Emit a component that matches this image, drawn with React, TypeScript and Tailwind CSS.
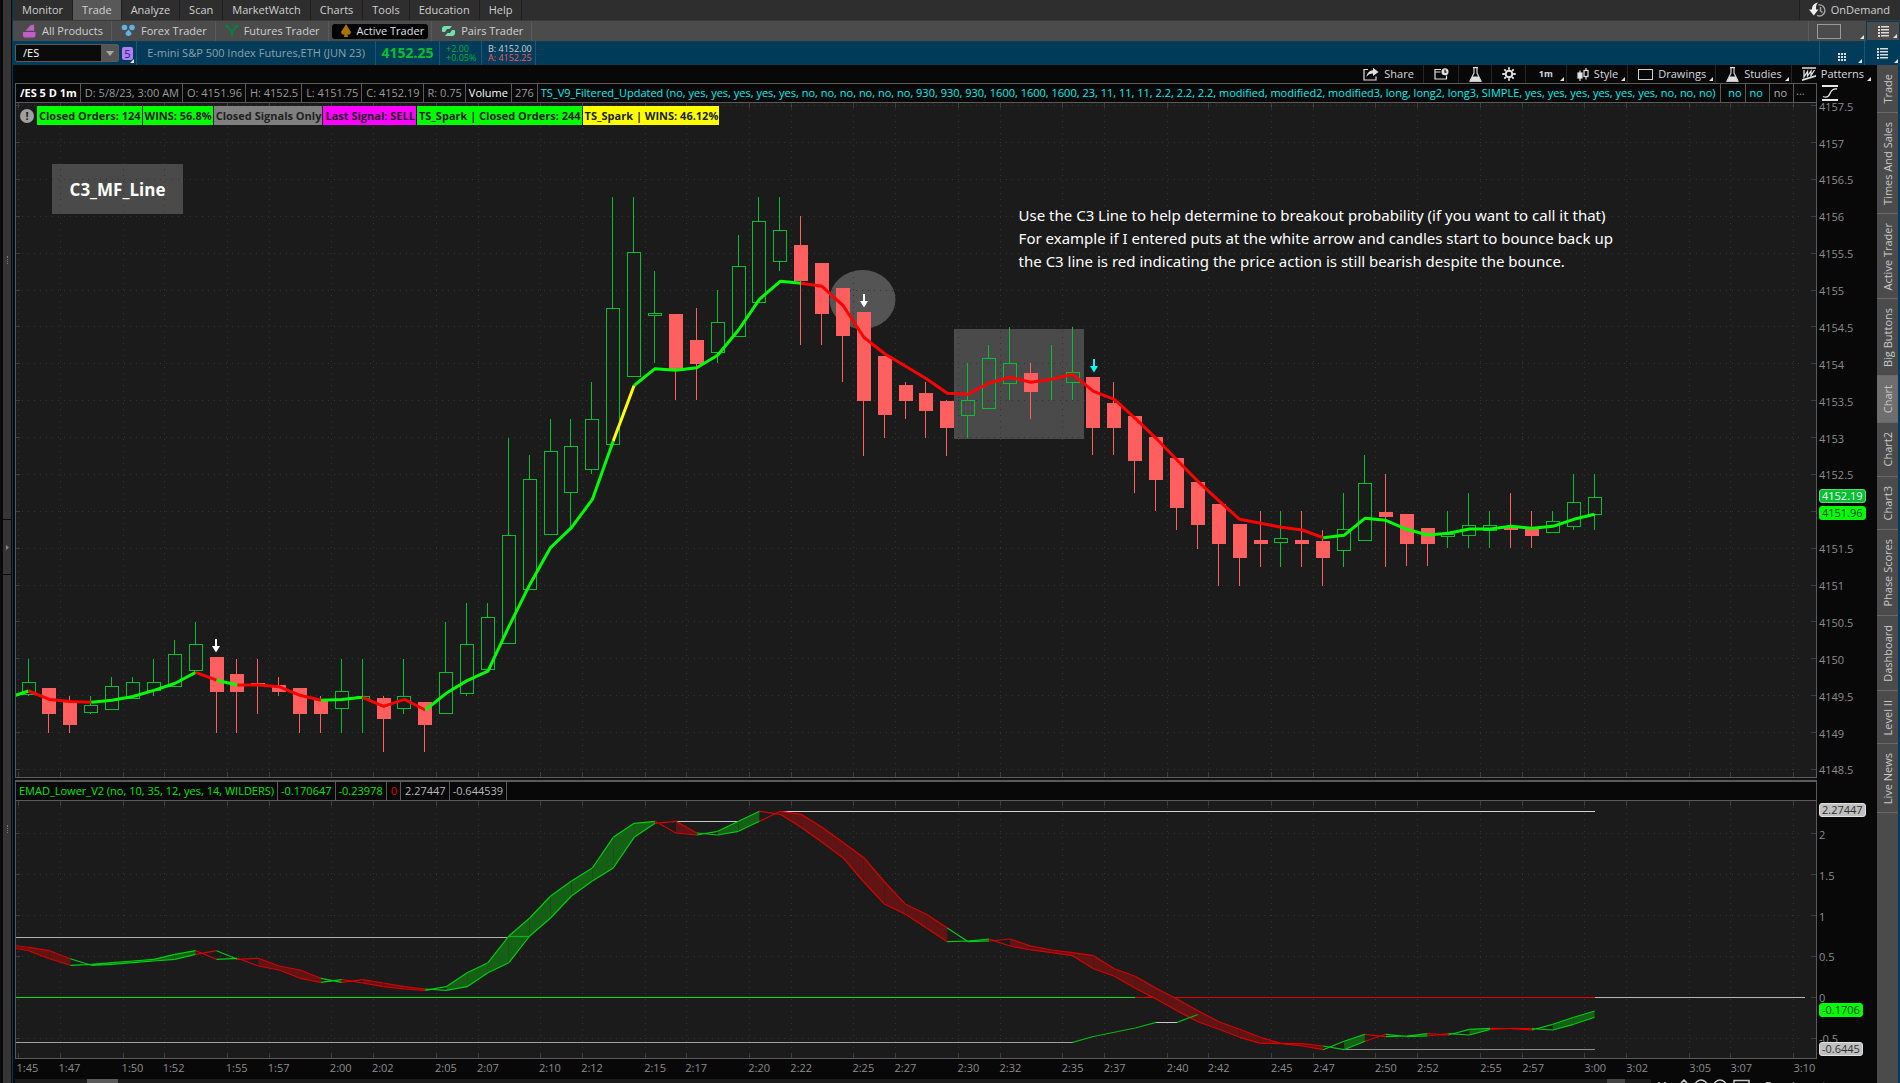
import type { ReactNode } from 'react';
import { clsx } from 'clsx';

const GREEN = '#00c030';
const RED = '#ff5f5f';

const menuItems = ['Monitor', 'Trade', 'Analyze', 'Scan', 'MarketWatch', 'Charts', 'Tools', 'Education', 'Help'];

const sideTabs = [
  'Trade', 'Times And Sales', 'Active Trader', 'Big Buttons', 'Chart', 'Chart2',
  'Chart3', 'Phase Scores', 'Dashboard', 'Level II', 'Live News',
];

const orderLabels = [
  { text: 'Closed Orders: 124', cls: 'bg-[#00ff00]' },
  { text: 'WINS: 56.8%', cls: 'bg-[#00ff00]' },
  { text: 'Closed Signals Only', cls: 'bg-[#808080]' },
  { text: 'Last Signal: SELL', cls: 'bg-[#ff00ff]' },
  { text: 'TS_Spark | Closed Orders: 244', cls: 'bg-[#00ff00]' },
  { text: 'TS_Spark | WINS: 46.12%', cls: 'bg-[#ffff00]' },
];

// Plot space: both panes share one coordinate system, one bar every 20.88 units
const LEFT = 16;
const WIDTH = 1800;
const TOP = 103;
const HEIGHT = 674;
const LOWER_TOP = 801;
const LOWER_HEIGHT = 257;
const STEP = 20.88;

const barX = (i: number) => 28.6 + i * STEP;
const slotX = (i: number) => Math.round(18.2 + i * STEP) + 0.5;
const priceY = (p: number) => 179.4 + (4156.5 - p) * 73.75;
const valueY = (v: number) => 997.3 - v * 81.7;

const prices = Array.from({ length: 19 }, (_, i) => 4157.5 - i * 0.5);
const values = [2, 1.5, 1, 0.5, 0, -0.5];
const ticks = Array.from({ length: 86 }, (_, i) => i).filter((i) => i % 5 === 0 || i % 5 === 2);

const timeLabel = (i: number) => {
  const m = 105 + i;
  return `${Math.floor(m / 60)}:${String(m % 60).padStart(2, '0')}`;
};

// [up?, high, body top, body bottom, low]
const candles: [number, number, number, number, number][] = [
  [1, 659, 682, 694, 696], [0, 688, 688, 714, 733], [0, 696, 702, 725, 733], [1, 696, 705, 712, 714],
  [1, 677, 686, 709, 709], [1, 677, 682, 698, 698], [1, 659, 682, 690, 696], [1, 640, 654, 686, 686],
  [1, 622, 644, 670, 670], [0, 657, 657, 692, 733], [0, 659, 674, 692, 733], [0, 659, 683, 685, 714],
  [0, 677, 685, 692, 696], [0, 688, 688, 714, 733], [0, 696, 700, 714, 733], [1, 659, 691, 708, 733],
  [1, 659, 696, 698, 733], [0, 696, 698, 719, 752], [1, 659, 696, 708, 714], [0, 702, 702, 725, 752],
  [1, 622, 672, 713, 713], [1, 603, 644, 693, 696], [1, 603, 617, 669, 669], [1, 438, 535, 643, 643],
  [1, 455, 479, 589, 589], [1, 419, 451, 534, 534], [1, 419, 446, 492, 527], [1, 382, 419, 469, 474],
  [1, 197, 308, 444, 444], [1, 197, 252, 376, 376], [1, 271, 313, 315, 363], [0, 314, 314, 370, 400],
  [0, 308, 340, 364, 400], [1, 290, 322, 352, 363], [1, 235, 266, 336, 336], [1, 197, 221, 302, 302],
  [1, 197, 230, 261, 271], [0, 216, 245, 281, 345], [0, 263, 263, 314, 345], [0, 288, 288, 336, 382],
  [0, 312, 312, 401, 456], [0, 356, 356, 415, 438], [0, 382, 385, 401, 419], [0, 382, 393, 411, 438],
  [0, 400, 401, 428, 456], [1, 363, 400, 415, 438], [1, 345, 358, 408, 408], [1, 327, 363, 383, 400],
  [0, 363, 373, 392, 419], [1, 345, 382, 382, 400], [1, 327, 372, 382, 400], [0, 377, 377, 428, 455],
  [0, 382, 403, 428, 455], [0, 416, 416, 461, 493], [0, 437, 437, 480, 511], [0, 458, 458, 508, 530],
  [0, 482, 482, 525, 549], [0, 504, 504, 544, 586], [0, 524, 524, 558, 586], [0, 511, 540, 544, 567],
  [1, 511, 538, 542, 567], [0, 511, 540, 544, 567], [0, 530, 541, 558, 586], [1, 493, 529, 550, 567],
  [1, 455, 483, 540, 540], [0, 474, 512, 517, 567], [0, 514, 514, 544, 566], [0, 528, 528, 544, 566],
  [1, 511, 534, 536, 548], [1, 493, 525, 535, 548], [1, 511, 525, 530, 548], [0, 493, 526, 530, 548],
  [0, 511, 528, 536, 548], [1, 511, 521, 532, 532], [1, 474, 502, 526, 530], [1, 474, 497, 514, 530],
];

const mfLine = [
  691, 699.4, 701.4, 702.2, 700.2, 696.5, 690.4, 683.5, 672.4, 680.2, 685, 685, 686.7, 695.3, 700.2, 699.4,
  697.3, 706.3, 699.4, 710, 693.3, 680.6, 671.2, 626.7, 584.7, 547.6, 527.6, 499.4, 441, 385.5, 368.7, 370.3,
  367.7, 355.3, 330, 299.3, 281.3, 283.3, 286.3, 305.3, 337.3, 353.7, 366.3, 378.7, 393.3, 394.3, 383, 377.3,
  382.3, 379.3, 374.3, 391.3, 399.3, 418.3, 438.3, 460, 481.3, 500.7, 519.3, 523.3, 527.3, 530, 537.7, 535.3,
  518.3, 520.3, 529.3, 535, 533.3, 529, 529, 526.3, 528.3, 526.3, 519.3, 514.3,
];

// [from bar, to bar, colour]
const mfRuns: [number, number, string][] = [
  [0, 3, '#ff0000'], [3, 8, '#00ff00'], [8, 9, '#ff0000'], [9, 10, '#00ff00'], [10, 14, '#ff0000'],
  [14, 16, '#00ff00'], [16, 19, '#ff0000'], [19, 28, '#00ff00'], [28, 29, '#ffff00'], [29, 37, '#00ff00'],
  [37, 62, '#ff0000'], [62, 75, '#00ff00'],
];

const emad = [
  950.7, 958.7, 965.3, 964.3, 962.7, 961, 959.3, 954.3, 950.7, 959.3, 958.3, 966, 970, 978.3, 982.3, 979.7,
  983, 986.7, 989, 990.3, 986.7, 972.7, 962.7, 936, 918, 896, 881, 868, 837.3, 823.3, 821.3, 833,
  835, 831.3, 821.3, 811.3, 814.3, 827.3, 842.3, 857.7, 882, 904.3, 914.3, 928, 941.7, 941, 939, 946,
  950, 952.7, 955.7, 968.7, 976.3, 988.3, 999, 1010.7, 1021.7, 1029.3, 1037.3, 1043.3, 1043.6, 1046, 1049.7, 1041.3,
  1034.3, 1036.7, 1036, 1033.7, 1035, 1029.3, 1028.3, 1028.7, 1030, 1024.3, 1017.3, 1011,
];

const pts = (list: [number, number][]) => list.map(([x, y]) => `${x},${y}`).join(' ');

function Corner() {
  return (
    <svg viewBox="0 0 4 4" className="absolute right-0.5 bottom-0.5 size-1" aria-hidden="true">
      <path d="M4 0V4H0z" fill="#e5e5e5" />
    </svg>
  );
}

function ProductsIcon() {
  return (
    <svg width="15" height="14" viewBox="0 0 15 14" fill="#c25fc4">
      <path d="M1 8h12.500v3.500a2 2 0 0 1-2 2H3a2 2 0 0 1-2-2z" />
      <path d="M3.500 6.800L8.500 1.200l3.500-.8.3 6.400z" />
    </svg>
  );
}

function ForexIcon() {
  return (
    <svg width="15" height="14" viewBox="0 0 15 14" fill="#5cb3e6">
      <circle cx="3.500" cy="3.500" r="2.800" />
      <circle cx="11" cy="3.500" r="2.800" />
      <path d="M7.500 5.500l3 3.500a3 3 0 1 1-6 0z" />
    </svg>
  );
}

function FuturesIcon() {
  return (
    <svg width="14" height="14" viewBox="0 0 14 14" fill="none" stroke="#0d7a45" strokeWidth="2.200">
      <path d="M2.500 2.500L7 7.500l4.500-5M7 7v6" />
      <circle cx="2.300" cy="2.300" r="1" fill="#0d7a45" />
      <circle cx="11.700" cy="2.300" r="1" fill="#0d7a45" />
    </svg>
  );
}

function ActiveIcon() {
  return (
    <svg width="12" height="14" viewBox="0 0 12 14" fill="#a87400">
      <path d="M6 0l1.500 2.500L11 8l-1 2.500H7.500L8 13H4l.5-2.500H2L1 8l3.500-5.500z" />
    </svg>
  );
}

function PairsIcon() {
  return (
    <svg width="15" height="12" viewBox="0 0 15 12" fill="#6fe0b0">
      <path d="M4 1h7l-2.500 3H6L4 7H1.500A3 3 0 0 1 1 4a3 3 0 0 1 3-3z" />
      <path d="M11 11H4l2.500-3H9l2-3h2.500a3 3 0 0 1 .5 3 3 3 0 0 1-3 3z" />
    </svg>
  );
}

function OnDemandIcon() {
  return (
    <svg width="18" height="16" viewBox="0 0 18 16" fill="none" stroke="#a8a8a8" strokeWidth="1.400">
      <path d="M9.500 3a5.500 5.500 0 1 1-1.500 10.300" />
      <path d="M11.500 5v4l2 1.500" />
      <path d="M9 .5C4.500 1.500 3 4 3 7.500H0L4.800 13.500l4.600-6H7C6.800 5 7.200 2.500 9 .5z" fill="#f0f0f0" stroke="none" />
    </svg>
  );
}

function ListIcon() {
  return (
    <svg width="11" height="11" viewBox="0 0 11 11" fill="#dcdcdc">
      {[0, 3, 6, 9].map((y) => (
        <path key={y} d={`M0 ${y}h2v2H0zM3 ${y}h8v1.500H3z`} />
      ))}
    </svg>
  );
}

function GridIcon() {
  return (
    <svg width="8" height="8" viewBox="0 0 8 8" fill="#dcdcdc">
      {[0, 3, 6].map((y) => (
        <path key={y} d={`M0 ${y}h2v2H0zM3 ${y}h2v2H3zM6 ${y}h2v2H6z`} />
      ))}
    </svg>
  );
}

function ShareIcon() {
  return (
    <svg width="16" height="14" viewBox="0 0 16 14" fill="none" stroke="#e0e0e0" strokeWidth="1.200">
      <path d="M5 2.500H1v10.500h12V9.500" />
      <path d="M10 .8L15.500 5 10 9V6.500C7 6.500 5 7.500 3.500 10 4 6 6.500 3.300 10 3.200z" fill="#e0e0e0" stroke="none" />
    </svg>
  );
}

function CalendarIcon() {
  return (
    <svg width="15" height="12" viewBox="0 0 15 12" fill="none" stroke="#e0e0e0" strokeWidth="1.200">
      <path d="M7 1.500H1V11h11.500V7.500M1 4h5.500" />
      <circle cx="11" cy="3.800" r="3.500" fill="#e0e0e0" stroke="none" />
      <path d="M11 1.800v2.400h1.500" stroke="#111" />
    </svg>
  );
}

function FlaskIcon() {
  return (
    <svg width="13" height="15" viewBox="0 0 13 15" fill="none" stroke="#e0e0e0" strokeWidth="1.100">
      <path d="M4 .6h5M5 .6v5.400L.8 14.300h11.400L8 6V.6" />
      <path d="M3.500 9.500h6L12 14.400H1z" fill="#e0e0e0" stroke="none" />
    </svg>
  );
}

function GearIcon() {
  return (
    <svg width="14" height="14" viewBox="0 0 14 14" fill="none" stroke="#e0e0e0">
      <circle cx="7" cy="7" r="3.300" strokeWidth="2" />
      <path d="M7 .3v2.500M7 11.200v2.500M.3 7h2.500M11.200 7h2.500M2.300 2.300L4 4M10 10l1.700 1.700M2.300 11.700L4 10M10 4l1.700-1.700" strokeWidth="1.800" />
    </svg>
  );
}

function StyleIcon() {
  return (
    <svg width="12" height="13" viewBox="0 0 12 13" fill="none" stroke="#e0e0e0" strokeWidth="1.200">
      <path d="M3 2.500V13M9 0v2.500M9 8.500v3" />
      <rect x="1" y="5" width="4" height="5" fill="#e0e0e0" />
      <rect x="7" y="2.500" width="4" height="6" />
    </svg>
  );
}

function BoxIcon() {
  return <span className="h-[11px] w-[15px] border border-[#d0d0d0]" />;
}

function PatternsIcon() {
  return (
    <svg width="14" height="14" viewBox="0 0 14 14" fill="none" stroke="#e0e0e0" strokeWidth="1.300">
      <path d="M0 1h14M0 13.200l14-4.400" strokeWidth="1.600" />
      <path d="M2 3v7l3.500-5.500V9L9 4v4.500L12.500 3" />
    </svg>
  );
}

function CurveIcon() {
  return (
    <svg width="16" height="16" viewBox="0 0 16 16" fill="none" stroke="#e8e8e8">
      <path d="M0 1h16M0 15h16" strokeWidth="2" />
      <path d="M1 11.500c5 2 6-1 7.500-4S12 3.500 15 4" strokeWidth="1.300" />
    </svg>
  );
}

function MenuBar() {
  return (
    <nav className="flex h-[21px] items-stretch border-b border-[#3a3a3a] bg-[#2e2e2e] text-[#d0d0d0]">
      {menuItems.map((item) => (
        <button
          key={item}
          className={clsx('border-r border-[#1f1f1f] px-[9px]', item === 'Trade' && 'bg-[#585858]')}
        >
          {item}
        </button>
      ))}
      <div className="flex-1" />
      <button className="flex items-center gap-1 border-l border-[#1f1f1f] pr-2.5 pl-[9px]">
        <OnDemandIcon />
        OnDemand
      </button>
    </nav>
  );
}

function TraderTab({ icon, label, active }: { icon: ReactNode; label: string; active?: boolean }) {
  return (
    <div className={clsx('flex items-center border-r border-[#5a5a5a]', active && 'px-[3px]')}>
      <button
        className={clsx(
          'flex items-center gap-[5px]',
          active ? 'h-[15px] rounded-[3px] bg-black pr-1 pl-2 text-[#e0e0e0]' : 'pr-2 pl-[9px]',
        )}
      >
        {icon}
        {label}
      </button>
    </div>
  );
}

function TraderBar() {
  return (
    <div className="flex h-5 items-stretch bg-[#4b4b4b] text-[#cfcfcf]">
      <TraderTab icon={<ProductsIcon />} label="All Products" />
      <TraderTab icon={<ForexIcon />} label="Forex Trader" />
      <TraderTab icon={<FuturesIcon />} label="Futures Trader" />
      <TraderTab icon={<ActiveIcon />} label="Active Trader" active />
      <TraderTab icon={<PairsIcon />} label="Pairs Trader" />
      <div className="flex-1" />
      <button aria-label="Layout" className="relative flex w-[58px] items-center border-l border-[#5a5a5a] pl-2">
        <span className="h-[15px] w-6 border border-[#9a9a9a]" />
        <Corner />
      </button>
      <button aria-label="Options" className="relative flex w-[34px] items-center justify-center border border-[#003d5c]">
        <ListIcon />
        <Corner />
      </button>
    </div>
  );
}

function SymbolBar() {
  return (
    <div className="flex h-6 items-stretch bg-[#003b59]">
      <div className="my-[3px] ml-0.5 flex w-[104px] rounded-[2px] border border-[#5a5a5a] bg-[#0b0b0b]">
        <input
          aria-label="Symbol"
          defaultValue="/ES"
          className="w-0 flex-1 bg-transparent pl-[7px] text-[11px] text-white outline-none"
        />
        <button aria-label="Recent symbols" className="flex w-[17px] items-center justify-center bg-[#555555]">
          <svg width="8" height="5" viewBox="0 0 8 5"><path d="M0 0h8L4 5z" fill="#a8a8a8" /></svg>
        </button>
      </div>
      <div className="relative flex w-[18px] items-center justify-center border-r border-[#1d5575]">
        <span className="rounded-[2px] bg-[#b57bff] px-0.5 text-[11px] leading-[13px] text-[#102a50]">5</span>
        <Corner />
      </div>
      <span className="flex w-[239px] items-center justify-center border-r border-[#1d5575] text-[#8fa0ac]">
        E-mini S&amp;P 500 Index Futures,ETH (JUN 23)
      </span>
      <strong className="flex w-16 items-center justify-center border-r border-[#1d5575] text-[14px] text-[#00c030]">
        4152.25
      </strong>
      <div className="flex w-[42px] flex-col justify-center border-r border-[#1d5575] pl-1.5 text-[9px] leading-[9px] text-[#00b030]">
        <span>+2.00</span>
        <span>+0.05%</span>
      </div>
      <div className="flex w-[54px] flex-col justify-center border-r border-[#1d5575] pl-1.5 text-[9px] leading-[9px]">
        <span className="text-[#d0d0d0]">B: 4152.00</span>
        <span className="text-[#f05c5c]">A: 4152.25</span>
      </div>
      <div className="flex-1" />
      <button aria-label="Grid" className="relative flex w-[45px] items-center justify-center border-l border-[#1d5575] pt-2">
        <GridIcon />
        <Corner />
      </button>
      <button aria-label="Chart options" className="relative flex w-9 items-center justify-center border-l border-[#1d5575]">
        <ListIcon />
        <Corner />
      </button>
    </div>
  );
}

function ToolButton({ icon, label, name, corner }: { icon?: ReactNode; label?: string; name?: string; corner?: boolean }) {
  return (
    <button
      aria-label={label ? undefined : name}
      className="relative flex items-center gap-[5px] border-r border-[#262626] pr-[9px] pl-[10px] last:border-r-0"
    >
      {icon}
      {label}
      {corner && <Corner />}
    </button>
  );
}

function ChartToolbar() {
  return (
    <div className="flex h-[18px] justify-end bg-[#080808] pr-1 text-[#d8d8d8]">
      <ToolButton icon={<ShareIcon />} label="Share" />
      <ToolButton icon={<CalendarIcon />} name="Calendar" />
      <ToolButton icon={<FlaskIcon />} name="Add study" />
      <ToolButton icon={<GearIcon />} name="Settings" />
      <button className="relative w-[41px] border-r border-[#262626] text-[9px] font-bold">
        1m
        <Corner />
      </button>
      <ToolButton icon={<StyleIcon />} label="Style" corner />
      <ToolButton icon={<BoxIcon />} label="Drawings" corner />
      <ToolButton icon={<FlaskIcon />} label="Studies" corner />
      <ToolButton icon={<PatternsIcon />} label="Patterns" corner />
    </div>
  );
}

function Cell({ children, className }: { children: ReactNode; className?: string }) {
  return (
    <span className={clsx('flex items-center border-r border-[#5a5a5a] pr-[3px] whitespace-nowrap', className ?? 'pl-1')}>
      {children}
    </span>
  );
}

function InfoRow() {
  return (
    <div className="flex h-5 min-w-0 flex-1 overflow-hidden border border-[#5a5a5a] bg-[#080808] text-[#9a9a9a]">
      <Cell className="pl-1 font-bold text-white">/ES 5 D 1m</Cell>
      <Cell>D: 5/8/23, 3:00 AM</Cell>
      <Cell>O: 4151.96</Cell>
      <Cell>H: 4152.5</Cell>
      <Cell>L: 4151.75</Cell>
      <Cell>C: 4152.19</Cell>
      <Cell>R: 0.75</Cell>
      <Cell className="pl-[3px] text-white">Volume</Cell>
      <Cell className="pl-[3px]">276</Cell>
      <Cell className="min-w-0 flex-1 overflow-hidden pl-[3px] text-[#00f0f0]">
        TS_V9_Filtered_Updated (no, yes, yes, yes, yes, yes, no, no, no, no, no, no, 930, 930, 930, 1600, 1600, 1600,
        23, 11, 11, 11, 2.2, 2.2, 2.2, modified, modified2, modified3, long, long2, long3, SIMPLE, yes, yes, yes, yes,
        yes, yes, no, no, no)
      </Cell>
      <Cell className="pl-1 text-[#00f0f0]">&nbsp;no</Cell>
      <Cell className="pl-1 text-[#00f0f0]">no&nbsp;</Cell>
      <Cell className="pl-1 text-[#b0b0b0]">no&nbsp;</Cell>
      <span className="w-[22px] px-0.5">...</span>
    </div>
  );
}

function Arrow({ x, y, color }: { x: number; y: number; color: string }) {
  return <path d={`M${x - 1} ${y}h2v7h3l-4 6.500l-4 -6.500h3z`} fill={color} />;
}

function Grid({ rows, top, height }: { rows: number[]; top: number; height: number }) {
  const bottom = top + height;
  return (
    <g shapeRendering="crispEdges" fill="none">
      <g stroke="#333333" strokeDasharray="1 5">
        {rows.map((y) => (
          <path key={y} d={`M${LEFT} ${Math.floor(y) + 0.5}H${LEFT + WIDTH - 14}`} />
        ))}
        {ticks.map((i) => (
          <path key={i} d={`M${slotX(i)} ${top}V${bottom}`} />
        ))}
      </g>
      <g stroke="#3d3d3d">
        {rows.map((y) => (
          <path key={y} d={`M${LEFT} ${Math.floor(y) + 0.5}h4M${LEFT + WIDTH} ${Math.floor(y) + 0.5}h-5`} />
        ))}
        {ticks.map((i) => (
          <path key={i} d={`M${slotX(i)} ${top}v5M${slotX(i)} ${bottom}v-5`} />
        ))}
      </g>
    </g>
  );
}

function Candle({ i }: { i: number }) {
  const [up, high, top, bottom, low] = candles[i];
  const x = Math.round(barX(i));
  const color = up ? GREEN : RED;
  return (
    <g shapeRendering="crispEdges">
      {high < top && <rect x={x - 1} y={high} width="1" height={top - high} fill={color} />}
      {low > bottom && <rect x={x - 1} y={bottom} width="1" height={low - bottom} fill={color} />}
      {up ? (
        <rect x={x - 6.5} y={top + 0.5} width="13" height={bottom - top} fill="none" stroke={color} />
      ) : (
        <rect x={x - 7} y={top} width="14" height={bottom - top} fill={color} />
      )}
    </g>
  );
}

function PriceChart() {
  return (
    <svg
      viewBox={`${LEFT} ${TOP} ${WIDTH} ${HEIGHT}`}
      preserveAspectRatio="none"
      className="absolute inset-0 size-full"
      role="img"
      aria-label="/ES one minute candles"
    >
      <rect x="52" y="164" width="131" height="50" fill="#4a4a4a" />
      <ellipse cx="862.500" cy="299.500" rx="33" ry="29.500" fill="#545454" />
      <rect x="954" y="329" width="130" height="110" fill="#4a4a4a" />
      <Grid rows={prices.map(priceY)} top={TOP} height={HEIGHT} />
      {candles.map((_, i) => (
        <Candle key={i} i={i} />
      ))}
      <g fill="none" strokeWidth="3" strokeLinejoin="round">
        <path d={`M15 695.500L${barX(0)} ${mfLine[0]}`} stroke="#00ff00" />
        {mfRuns.map(([from, to, color]) => (
          <polyline
            key={from}
            stroke={color}
            points={pts(mfLine.slice(from, to + 1).map((y, k) => [barX(from + k), y]))}
          />
        ))}
      </g>
      <Arrow x={216} y={639} color="#ffffff" />
      <Arrow x={864} y={294} color="#ffffff" />
      <Arrow x={1094} y={359} color="#00ffff" />
    </svg>
  );
}

function EmadChart() {
  // The slow edge of the ribbon is the fast one, one bar late
  const prev = (i: number) => (i > 0 ? emad[i - 1] : 947.3);
  const rising = (i: number) => emad[i] < prev(i);
  return (
    <svg
      viewBox={`${LEFT} ${LOWER_TOP} ${WIDTH} ${LOWER_HEIGHT}`}
      preserveAspectRatio="none"
      className="absolute inset-0 size-full"
      role="img"
      aria-label="EMAD lower study"
    >
      <Grid rows={values.map(valueY)} top={LOWER_TOP} height={LOWER_HEIGHT} />
      <g fill="none" shapeRendering="crispEdges">
        <path d={`M15 997.500H${barX(53)}`} stroke="#00e600" />
        <path d={`M${barX(53)} 997.500H${barX(75)}`} stroke="#e60000" />
        <path d={`M${barX(75)} 997.500H1805`} stroke="#b8b8b8" />
        <path d={`M15 937.500H${barX(23)}`} stroke="#b0b0b0" />
        <path d={`M${barX(31)} 821.500H${barX(35)}`} stroke="#c8c8c8" />
        <path d={`M${barX(36)} 811.500H${barX(75)}`} stroke="#d0d0d0" />
        <path d={`M15 1042.500H${barX(50)}`} stroke="#a0a0a0" />
        <path d={`M${barX(54)} 1022.500H${barX(55)}`} stroke="#c8c8c8" />
        <path d={`M${barX(63)} 1049.500H${barX(75)}`} stroke="#909090" />
      </g>
      <path d="M15 945.500L28.600 947.300L28.600 950.700L15 948.500z" fill="#601414" stroke="#d00000" />
      {emad.slice(1).map((y, k) => {
        const i = k + 1;
        const up = rising(i);
        const [x0, x1] = [barX(i - 1), barX(i)];
        return (
          <g key={i}>
            {(i === 1 || up === rising(i - 1)) && (
              <polygon
                points={pts([[x0, emad[i - 1]], [x1, y], [x1, prev(i)], [x0, prev(i - 1)]])}
                fill={up ? '#146014' : '#601414'}
              />
            )}
            <path
              d={`M${x0} ${emad[i - 1]}L${x1} ${y}M${x0} ${prev(i - 1)}L${x1} ${prev(i)}`}
              stroke={up ? '#00cc10' : '#d80000'}
              strokeWidth="1.200"
              fill="none"
            />
          </g>
        );
      })}
      <g fill="none" stroke="#00b810" strokeWidth="1.200">
        <path d={`M${barX(23)} 936.500H${barX(24)}`} />
        <polyline points={pts([[barX(50), 1042.3], [barX(51), 1036.5], [barX(53), 1028], [barX(54), 1022.4]])} />
        <polyline points={pts([[barX(55), 1022.4], [barX(56), 1014.5]])} />
      </g>
    </svg>
  );
}

function AxisLabel({ top, children }: { top: number; children: ReactNode }) {
  return (
    <span className="absolute left-0.5 -translate-y-1/2 leading-none" style={{ top: `${top}%` }}>
      {children}
    </span>
  );
}

function AxisBadge({ top, className, children }: { top: number; className: string; children: ReactNode }) {
  return (
    <span
      className={clsx('absolute left-0.5 -translate-y-1/2 rounded-[3px] border px-0.5 leading-3', className)}
      style={{ top: `${top}%` }}
    >
      {children}
    </span>
  );
}

function LeftRail() {
  return (
    <div className="flex w-[13px] flex-col border-r border-[#003b59] bg-[#0a0a0a] pr-px pl-[3px]">
      <div className="flex flex-[519] items-center justify-center bg-[#363636]">
        <span className="h-2 border-l border-dotted border-[#777777]" />
      </div>
      <button aria-label="Expand panel" className="my-px flex h-[54px] items-center justify-center bg-[#363636]">
        <svg width="3" height="5" viewBox="0 0 3 5"><path d="M0 0l3 2.500L0 5z" fill="#888888" /></svg>
      </button>
      <div className="flex flex-[508] items-center justify-center bg-[#363636]">
        <span className="h-2 border-l border-dotted border-[#777777]" />
      </div>
    </div>
  );
}

function SideTabs() {
  return (
    <aside className="flex w-[23px] flex-col border-r-2 border-[#003b59] bg-[#4b4b4b] text-[#c8c8c8]">
      {sideTabs.map((tab) => (
        <button
          key={tab}
          className={clsx(
            'flex shrink-0 items-center justify-center border-b border-[#686868] pt-[9px]',
            tab === 'Chart' ? 'bg-[#6e6e6e]' : '',
            tab.startsWith('Chart') ? 'pb-[9px]' : 'pb-2',
          )}
        >
          <span className="rotate-180 [writing-mode:vertical-rl]">{tab}</span>
        </button>
      ))}
    </aside>
  );
}

function BottomStrip() {
  return (
    <footer className="flex h-1 items-start overflow-hidden">
      <div className="flex h-1 flex-1 bg-[#1b1b1b]">
        <div className="ml-[72px] w-[31px] bg-[#5a5a5a]" />
        <div className="flex-1" />
        <div className="mr-[26px] w-[18px] bg-[#444444]" />
      </div>
      <svg width="98" height="4" viewBox="0 0 98 4" className="mr-3 ml-1" fill="none" stroke="#c8c8c8" strokeWidth="1.500">
        <path d="M4 3v1M10 3v1M26 4l3-3 3 3" />
        <circle cx="46" cy="7" r="6" />
        <circle cx="65" cy="7" r="6" />
        <path d="M79 4V1.500h15V4" />
      </svg>
      <button className="mr-3 w-[100px] text-left text-[#c8c8c8]">Drawing set: Default</button>
    </footer>
  );
}

export default function App() {
  const mainTop = (y: number) => ((y - TOP) / HEIGHT) * 100;
  const lowerTop = (y: number) => ((y - LOWER_TOP) / LOWER_HEIGHT) * 100;

  return (
    <div className="flex h-screen w-full overflow-hidden bg-[#080808] font-['Open_Sans','Noto_Sans',sans-serif] text-[11px] leading-[14px]">
      <LeftRail />
      <div className="flex min-w-0 flex-1 flex-col">
        <MenuBar />
        <TraderBar />
        <SymbolBar />

        <div className="flex min-h-0 flex-1">
          <main className="flex min-w-0 flex-1 flex-col pl-0.5">
            <ChartToolbar />
            <div className="flex">
              <InfoRow />
              <div className="flex w-[60px] items-start pt-0.5 pl-[5px]">
                <CurveIcon />
              </div>
            </div>

            {/* Price pane */}
            <div className="flex min-h-0 flex-[674]">
              <div className="relative flex-1 border-x border-[#5a5a5a] bg-[#1b1b1b]">
                <PriceChart />
                <div className="relative flex items-center gap-px pt-[3px] pl-1 font-bold text-[#202020]">
                  <span className="mr-0.5 flex size-[14px] items-center justify-center rounded-full bg-[#a0a0a0] text-[11px] text-[#1b1b1b]">
                    !
                  </span>
                  {orderLabels.map((label) => (
                    <span key={label.text} className={clsx('pr-px pl-0.5 leading-[19px]', label.cls)}>
                      {label.text}
                    </span>
                  ))}
                </div>
                <h2 className="absolute top-[9%] left-[2%] flex h-[52px] w-[131px] items-center justify-center text-[17px] font-bold text-white">
                  C3_MF_Line
                </h2>
                <p className="absolute top-[15%] left-[55.7%] font-['Noto_Sans',sans-serif] text-[15px] leading-[23px] whitespace-pre text-white">
                  Use the C3 Line to help determine to breakout probability (if you want to call it that)
                  <br />
                  For example if I entered puts at the white arrow and candles start to bounce back up
                  <br />
                  the C3 line is red indicating the price action is still bearish despite the bounce.
                </p>
              </div>
              <div className="relative w-[60px] text-[#8c8c8c]">
                {prices.filter((p) => p !== 4152).map((p) => (
                  <AxisLabel key={p} top={mainTop(priceY(p))}>{p}</AxisLabel>
                ))}
                <AxisBadge top={mainTop(496)} className="border-[#60d880] bg-[#00c030] text-white">4152.19</AxisBadge>
                <AxisBadge top={mainTop(513)} className="border-[#00ff00] bg-[#00ff00] text-[#104010]">4151.96</AxisBadge>
              </div>
            </div>

            <div className="mr-[60px] h-1 border-y border-[#5a5a5a] bg-[#111111]" />

            {/* Study pane */}
            <div className="mr-[60px] flex h-5 border border-[#5a5a5a] bg-[#080808] text-[#b8b8b8]">
              <Cell className="pl-[3px] text-[#00e600]">EMAD_Lower_V2 (no, 10, 35, 12, yes, 14, WILDERS)</Cell>
              <Cell className="pl-[3px] text-[#00e600]">-0.170647</Cell>
              <Cell className="pl-[3px] text-[#00e600]">-0.23978</Cell>
              <Cell className="pl-1 text-[#e00000]">0</Cell>
              <Cell>2.27447</Cell>
              <Cell className="pl-[3px]">-0.644539</Cell>
            </div>
            <div className="flex min-h-0 flex-[257]">
              <div className="relative flex-1 border-x border-[#5a5a5a] bg-[#1b1b1b]">
                <EmadChart />
              </div>
              <div className="relative w-[60px] text-[#8c8c8c]">
                {values.map((v) => (
                  <AxisLabel key={v} top={lowerTop(valueY(v))}>{v}</AxisLabel>
                ))}
                <AxisBadge top={lowerTop(810)} className="border-[#e0e0e0] bg-[#c0c0c0] text-[#303030]">2.27447</AxisBadge>
                <AxisBadge top={lowerTop(1010)} className="border-[#00ff00] bg-[#00ff00] text-[#104010]">-0.1706</AxisBadge>
                <AxisBadge top={lowerTop(1049)} className="border-[#e0e0e0] bg-[#c0c0c0] text-[#303030]">-0.6445</AxisBadge>
              </div>
            </div>

            {/* Time axis */}
            <div className="relative mr-[60px] h-[21px] border-t border-[#5a5a5a] text-[#8c8c8c]">
              {ticks.map((i) => (
                <span
                  key={i}
                  className="absolute top-[2px]"
                  style={{ left: `${((slotX(i) - LEFT - 1) / WIDTH) * 100}%` }}
                >
                  {timeLabel(i)}
                </span>
              ))}
            </div>
            <BottomStrip />
          </main>
          <SideTabs />
        </div>
      </div>
    </div>
  );
}
